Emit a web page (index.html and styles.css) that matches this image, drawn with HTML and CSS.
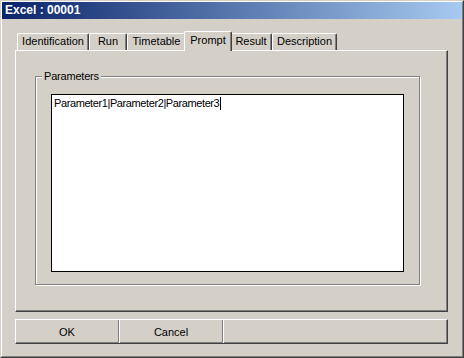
FILE: index.html
```html
<!DOCTYPE html>
<html>
<head>
<meta charset="utf-8">
<link rel="stylesheet" href="styles.css">
</head>
<body>
<div class="window">
  <div class="frame">
    <div class="titlebar">Excel : 00001</div>
    <div class="content">
      <div class="tabs">
        <div class="tab tab-ident">Identification</div>
        <div class="tab tab-run">Run</div>
        <div class="tab tab-time">Timetable</div>
        <div class="tab tab-prompt active">Prompt</div>
        <div class="tab tab-result">Result</div>
        <div class="tab tab-desc">Description</div>
      </div>
      <div class="panel">
        <div class="group">
          <span class="legend">Parameters</span>
          <div class="editbox">Parameter1|Parameter2|Parameter3<span class="caret"></span></div>
        </div>
      </div>
      <div class="buttonbar">
        <div class="btn btn-ok">OK</div>
        <div class="btn btn-cancel">Cancel</div>
        <div class="btn btn-rest"></div>
      </div>
    </div>
  </div>
</div>
</body>
</html>
```
FILE: styles.css
```css
* { box-sizing: border-box; }
html, body { margin: 0; padding: 0; background: #d4d0c8; }
body {
  font-family: "Liberation Sans", Arial, sans-serif;
  font-size: 11px;
  color: #000;
}
.window {
  width: 464px;
  height: 358px;
  border: 1px solid;
  border-color: #d4d0c8 #404040 #404040 #d4d0c8;
  background: #d4d0c8;
}
.frame {
  height: 100%;
  border: 1px solid;
  border-color: #ffffff #808080 #808080 #ffffff;
}
.titlebar {
  height: 17px;
  background: linear-gradient(to right, #0a246a, #a6caf0);
  color: #fff;
  font-weight: bold;
  font-size: 12px;
  line-height: 17px;
  padding-left: 3px;
}
.content {
  padding: 12px 14px 0 13px;
}
.tabs {
  display: flex;
  align-items: flex-end;
  padding-left: 2px;
  height: 19px;
}
.tab {
  height: 17px;
  border-top: 1px solid #fff;
  border-left: 1px solid #fff;
  border-right: 1px solid #404040;
  box-shadow: inset -1px 0 0 #808080;
  border-top-left-radius: 2px;
  border-top-right-radius: 2px;
  text-align: center;
  line-height: 15px;
  background: #d4d0c8;
}
.tab-ident { width: 72px; }
.tab-run { width: 38px; }
.tab-time { width: 59px; }
.tab-prompt { width: 44px; }
.tab-result { width: 42px; }
.tab-desc { width: 65px; }
.tab.active {
  height: 20px;
  width: 48px;
  margin: 0 -2px -1px;
  position: relative;
  z-index: 1;
  line-height: 17px;
}
.panel {
  height: 262px;
  border: 1px solid;
  border-color: #fff #404040 #404040 #fff;
  box-shadow: inset -1px -1px 0 #808080;
  padding: 25px 27px 26px 19px;
}
.group {
  position: relative;
  height: 100%;
  border: 1px solid #808080;
  box-shadow: inset 1px 1px 0 #fff, 1px 1px 0 #fff;
  padding: 17px 15px 12px 15px;
}
.legend {
  position: absolute;
  top: -8px;
  left: 6px;
  padding: 0 2px;
  background: #d4d0c8;
  line-height: 14px;
  letter-spacing: -0.2px;
}
.editbox {
  height: 100%;
  background: #fff;
  border: 1px solid #000;
  padding: 1px 2px;
  line-height: 14px;
  letter-spacing: -0.4px;
}
.caret {
  display: inline-block;
  width: 1px;
  height: 13px;
  background: #000;
  vertical-align: -3px;
  margin-left: 1px;
}
.buttonbar {
  margin-top: 7px;
  height: 25px;
  display: flex;
  border: 1px solid;
  border-color: #fff #404040 #404040 #fff;
  box-shadow: inset -1px -1px 0 #808080;
}
.btn {
  display: flex;
  align-items: center;
  justify-content: center;
  border-right: 1px solid #808080;
}
.btn + .btn { border-left: 1px solid #fff; }
.btn-ok { width: 103px; }
.btn-cancel { width: 104px; }
.btn-rest { flex: 1; border-right: none; }
```
